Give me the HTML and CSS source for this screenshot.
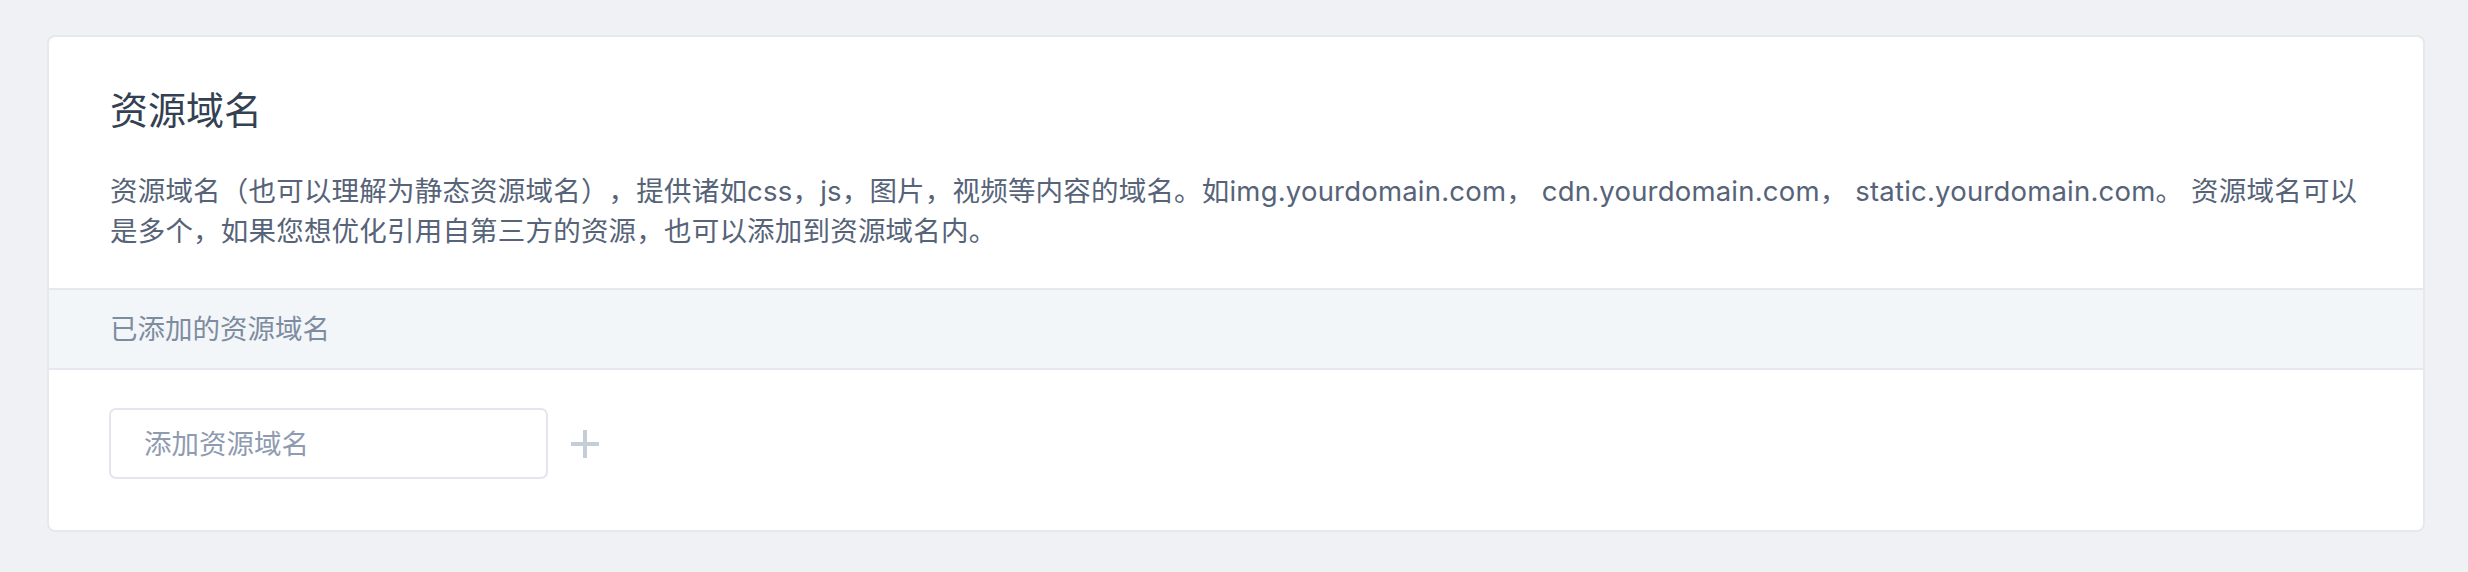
FILE: index.html
```html
<!DOCTYPE html>
<html lang="zh-CN">
<head>
    <meta charset="UTF-8">
    <meta name="viewport" content="width=device-width, initial-scale=1.0">
    <title>资源域名</title>
    <link rel="stylesheet" href="styles.css">
</head>
<body>
    <div class="panel">
        <div class="panel-head">
            <h2 class="title">资源域名</h2>
            <p class="desc">资源域名（也可以理解为静态资源域名），提供诸如css，js，图片，视频等内容的域名。如img.yourdomain.com， cdn.yourdomain.com， static.yourdomain.com。 资源域名可以<br>是多个，如果您想优化引用自第三方的资源，也可以添加到资源域名内。</p>
        </div>
        <div class="sub-head">已添加的资源域名</div>
        <div class="add-row">
            <input class="domain-input" type="text" placeholder="添加资源域名">
            <span class="add-btn">
                <svg width="28" height="28" viewBox="0 0 28 28">
                    <path d="M14 0 V28 M0 14 H28" stroke="#c5cdd9" stroke-width="4" fill="none"/>
                </svg>
            </span>
        </div>
    </div>
</body>
</html>
```

FILE: styles.css
```css
* {
    margin: 0;
    padding: 0;
    box-sizing: border-box;
}
body {
    background-color: #eff1f5;
    padding: 35px 43px 40px 47px;
    font-family: Inter, "Noto Sans CJK SC", sans-serif;
    text-spacing-trim: space-all;
}
.panel {
    background-color: #fff;
    border: 2px solid #e5e8ee;
    border-radius: 8px;
}
.panel-head {
    padding: 47px 30px 37px 61px;
}
.panel-head .title {
    font-size: 38px;
    font-weight: normal;
    line-height: 53px;
    color: #344153;
}
.panel-head .desc {
    margin-top: 34px;
    font-size: 27.5px;
    letter-spacing: 0.2px;
    line-height: 40px;
    color: #566378;
}
.sub-head {
    height: 82px;
    padding-left: 61px;
    line-height: 78px;
    font-size: 27.5px;
    color: #7e8ca1;
    background-color: #f3f6f9;
    border-top: 2px solid #e5e8ee;
    border-bottom: 2px solid #e5e8ee;
}
.add-row {
    display: flex;
    align-items: center;
    gap: 23px;
    padding: 38px 61px 51px 60px;
}
.domain-input {
    width: 439px;
    height: 71px;
    padding-left: 33px;
    border: 2px solid #e3e7ed;
    border-radius: 7px;
    font-family: inherit;
    font-size: 27.5px;
    color: #344153;
    outline: none;
}
.domain-input::placeholder {
    color: #8f9bb0;
}
.add-btn {
    display: flex;
    width: 28px;
    height: 28px;
    cursor: pointer;
}
```
